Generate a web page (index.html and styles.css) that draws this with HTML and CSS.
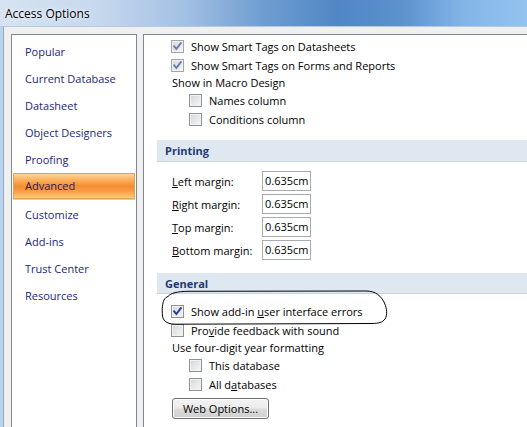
FILE: index.html
```html
<!DOCTYPE html>
<html>
<head>
<meta charset="utf-8">
<title>Access Options</title>
<link rel="stylesheet" href="styles.css">
</head>
<body>
<div class="window">
  <div class="titlebar"><span class="title">Access Options</span></div>
  <div class="frame">
    <div class="client">
      <nav class="nav">
        <div class="nav-item">Popular</div>
        <div class="nav-item">Current Database</div>
        <div class="nav-item">Datasheet</div>
        <div class="nav-item">Object Designers</div>
        <div class="nav-item">Proofing</div>
        <div class="nav-item active">Advanced</div>
        <div class="nav-item">Customize</div>
        <div class="nav-item">Add-ins</div>
        <div class="nav-item">Trust Center</div>
        <div class="nav-item">Resources</div>
      </nav>
      <main class="main">
        <div class="row"><span class="cb checked dim"><svg viewBox="0 0 13 13"><path d="M3.2 6.4 L5.4 9 L9.8 3.2"/></svg></span><span>Show Smart Tags on Datasheets</span></div>
        <div class="row"><span class="cb checked dim"><svg viewBox="0 0 13 13"><path d="M3.2 6.4 L5.4 9 L9.8 3.2"/></svg></span><span>Show Smart Tags on Forms and Reports</span></div>
        <div class="label-row">Show in Macro Design</div>
        <div class="row sub"><span class="cb"></span><span>Names column</span></div>
        <div class="row sub"><span class="cb"></span><span>Conditions column</span></div>

        <div class="section-head printing">Printing</div>
        <div class="fields">
          <div class="field"><span class="field-label"><u>L</u>eft margin:</span><span class="input">0.635cm</span></div>
          <div class="field"><span class="field-label"><u>R</u>ight margin:</span><span class="input">0.635cm</span></div>
          <div class="field"><span class="field-label"><u>T</u>op margin:</span><span class="input">0.635cm</span></div>
          <div class="field"><span class="field-label"><u>B</u>ottom margin:</span><span class="input">0.635cm</span></div>
        </div>

        <div class="section-head general">General</div>
        <div class="general-body">
          <div class="row"><span class="cb checked"><svg viewBox="0 0 13 13"><path d="M3.2 6.4 L5.4 9 L9.8 3.2"/></svg></span><span>Show add-in <u>u</u>ser interface errors</span></div>
          <div class="row"><span class="cb"></span><span>Pro<u>v</u>ide feedback with sound</span></div>
          <div class="label-row">Use four-digit year formatting</div>
          <div class="row sub"><span class="cb"></span><span>This database</span></div>
          <div class="row sub"><span class="cb"></span><span>All d<u>a</u>tabases</span></div>
          <button class="btn">Web Options...</button>
        </div>
      </main>
    </div>
  </div>
  <svg class="annot" width="527" height="427" viewBox="0 0 527 427">
    <path d="M168 296.5 C171 293 177 291.5 188 291.3 L366 291 C376 291 381 296 384.5 303 C387 309 387.5 315 385 319 C382.5 322.5 379 323.3 372 323.5 L178 324.2 C168 324.5 163.5 322 162.5 316 C161.8 309 162.5 303 164 300 C165 298 166.5 297 168 296.5 Z"/>
  </svg>
</div>
</body>
</html>
```
FILE: styles.css
```css
html, body {
  margin: 0;
  padding: 0;
  background: #f0f0f0;
}
body {
  font-family: "Open Sans", "Liberation Sans", sans-serif;
  font-size: 11px;
  color: #000;
}
.window {
  position: relative;
  width: 527px;
  height: 427px;
  overflow: hidden;
  display: flex;
  flex-direction: column;
}
.titlebar {
  height: 27px;
  flex-shrink: 0;
  display: flex;
  align-items: center;
  background: linear-gradient(90deg, #d6e3f1 0%, #c7d9ee 18%, #a3c1e4 35%, #6f9dd1 50%, #5087c4 64%, #5b91cd 76%, #83b5e8 88%, #95c3ef 100%);
  border-bottom: 1px solid #b5c8dd;
  box-sizing: border-box;
}
.title {
  padding-left: 5px;
  font-size: 12px;
  color: #000;
  text-shadow: 0 0 6px #eef4fb, 0 0 3px #eef4fb;
}
.frame {
  flex: 1;
  display: flex;
  border-left: 3px solid #b9d4f1;
  min-height: 0;
}
.client {
  flex: 1;
  display: flex;
  background: #f0f0f0;
  border-left: 1px solid #97a6b8;
  padding-top: 7px;
  min-height: 0;
}
.nav {
  width: 124px;
  flex-shrink: 0;
  margin-left: 7px;
  background: #fff;
  border: 1px solid #828790;
  border-bottom: none;
  padding-top: 4px;
}
.nav-item {
  height: 26px;
  margin: 0 1px 1px 1px;
  border: 1px solid transparent;
  box-sizing: border-box;
  padding-left: 11px;
  line-height: 24px;
  color: #1c1f7c;
}
.nav-item.active {
  margin-top: -1px;
  margin-bottom: 3px;
  border-color: #e3a44e;
  background: linear-gradient(#fdd49d 0%, #fbb566 22%, #f98c30 50%, #fa9a44 70%, #fdca7e 100%);
  box-shadow: 0 1px 0 #c6d0dc;
  color: #1e1c5e;
}
.main {
  flex: 1;
  margin-left: 6px;
  background: #fff;
  border-left: 1px solid #828790;
  border-top: 1px solid #828790;
  padding-top: 2px;
  min-width: 0;
}
.row {
  height: 19px;
  display: flex;
  align-items: center;
  gap: 7px;
  padding-left: 27px;
  white-space: nowrap;
}
.row.sub {
  padding-left: 45px;
}
.label-row {
  height: 16px;
  line-height: 16px;
  padding-left: 28px;
  white-space: nowrap;
}
.cb {
  width: 13px;
  height: 13px;
  box-sizing: border-box;
  flex-shrink: 0;
  border: 1px solid #8f9194;
  background: linear-gradient(135deg, #d2d4d8 0%, #e6e7e9 50%, #f7f7f7 100%);
  box-shadow: inset 0 0 0 1px #f2f2f2;
  position: relative;
}
.cb.dim {
  border-color: #a3a5a8;
}
.cb svg {
  position: absolute;
  left: -1px;
  top: -1px;
  width: 13px;
  height: 13px;
}
.cb svg path {
  fill: none;
  stroke: #26409a;
  stroke-width: 2;
  stroke-linecap: square;
}
.cb.dim svg path {
  stroke: #6d7fb0;
}
.section-head {
  margin-left: 13px;
  height: 22px;
  box-sizing: border-box;
  line-height: 21px;
  padding-left: 8px;
  background: #dfe8f1;
  border-bottom: 1px solid #c8d4e0;
  font-weight: bold;
  color: #1f3a72;
}
.section-head.printing {
  margin-top: 11px;
}
.section-head.general {
  margin-top: 13px;
  height: 21px;
}
.fields {
  padding-top: 9px;
  display: flex;
  flex-direction: column;
  gap: 3px;
}
.field {
  display: flex;
  align-items: center;
  height: 20px;
  padding-left: 28px;
}
.field-label {
  width: 90px;
  white-space: nowrap;
}
.input {
  width: 49px;
  height: 20px;
  box-sizing: border-box;
  border: 1px solid #a7abb2;
  padding-left: 2px;
  line-height: 18px;
  white-space: nowrap;
}
.general-body {
  padding-top: 8px;
  display: flex;
  flex-direction: column;
}
.btn {
  align-self: flex-start;
  margin: 4px 0 0 28px;
  width: 97px;
  height: 21px;
  padding: 0;
  font-family: inherit;
  font-size: 11px;
  color: #000;
  border: 1px solid #707070;
  border-radius: 3px;
  background: linear-gradient(#f3f3f3 0%, #ebebeb 48%, #dcdcdc 52%, #cfcfcf 100%);
  box-shadow: inset 0 0 0 1px #fcfcfc;
}
.annot {
  position: absolute;
  left: 0;
  top: 0;
  pointer-events: none;
}
.annot path {
  fill: none;
  stroke: #000;
  stroke-width: 1;
}
```
